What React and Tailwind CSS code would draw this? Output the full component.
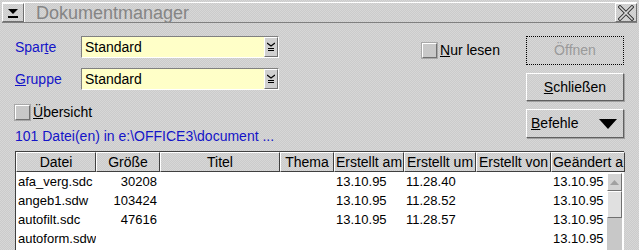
import React from "react";

const raised = "border border-t-white border-l-white border-b-[#707070] border-r-[#707070]";

function Combo({ value }) {
  return (
    <div className="flex h-[22px] w-[198px] border border-t-[#808080] border-l-[#808080] border-b-white border-r-white bg-[#ffffc8]">
      <div className="flex-1 pl-[3px] text-[14px] leading-[20px] text-black">{value}</div>
      <div className={"flex h-[20px] w-[14px] items-center justify-center bg-[#d0d0d0] " + raised}>
        <svg width="8" height="10" viewBox="0 0 8 10">
          <path d="M0 1 L4 4 L8 1" stroke="#000" strokeWidth="1.2" fill="none" />
          <rect x="1" y="6" width="6" height="1" fill="#000" />
          <rect x="1" y="8" width="6" height="1" fill="#000" />
        </svg>
      </div>
    </div>
  );
}

function Check({ children }) {
  return (
    <div className="flex items-center gap-[3px]">
      <div className="h-[15px] w-[15px] border border-t-white border-l-white border-b-[#707070] border-r-[#707070] bg-[#c8c8c8] shadow-[0_0_0_1px_#a8a8a8]" />
      <span className="text-[14px] leading-[16px] text-black">{children}</span>
    </div>
  );
}

const cols = [
  { name: "Datei", w: 80 },
  { name: "Größe", w: 64 },
  { name: "Titel", w: 120 },
  { name: "Thema", w: 54 },
  { name: "Erstellt am", w: 70 },
  { name: "Erstellt um", w: 72 },
  { name: "Erstellt von", w: 75 },
  { name: "Geändert a", w: 74 },
];

const rows = [
  ["afa_verg.sdc", "30208", "", "", "13.10.95", "11.28.40", "", "13.10.95"],
  ["angeb1.sdw", "103424", "", "", "13.10.95", "11.28.52", "", "13.10.95"],
  ["autofilt.sdc", "47616", "", "", "13.10.95", "11.28.57", "", "13.10.95"],
  ["autoform.sdw", "", "", "", "", "", "", "13.10.95"],
  ["", "", "", "", "", "", "", "13.10.95"],
];

export default function App() {
  return (
    <div className="h-[250px] w-[639px] overflow-hidden bg-[#d1d1d1] bg-[image:repeating-conic-gradient(#cbcbcb_0_25%,#d7d7d7_0_50%)] bg-[length:2px_2px] font-['Liberation_Sans',Arial,sans-serif] text-black">
      {/* Title bar */}
      <div className="px-[2px] pt-[2px]">
        <div className="flex h-[21px] items-stretch border-t border-t-white border-b border-b-[#808080]">
          <div className={"flex w-[22px] items-center justify-center " + raised}>
            <svg width="12" height="10" viewBox="0 0 12 10">
              <path d="M1 1 L11 1 L6 6 Z" fill="#000" />
              <rect x="1" y="8" width="10" height="2" fill="#000" />
            </svg>
          </div>
          <div className="flex flex-1 items-center border-l border-l-white pl-[11px] text-[18px] leading-[20px] text-[#858585]">
            Dokumentmanager
          </div>
          <div className={"flex w-[22px] items-center justify-center " + raised}>
            <svg width="16" height="16" viewBox="0 0 16 16">
              <path d="M2 2 L14 14 M14 2 L2 14" stroke="#303030" strokeWidth="3.4" strokeLinecap="square" />
              <path d="M2 2 L14 14 M14 2 L2 14" stroke="#d8d8d8" strokeWidth="1.6" strokeLinecap="square" />
            </svg>
          </div>
        </div>
      </div>

      {/* Upper form */}
      <div className="mt-[13px] flex pl-[15px] pr-[15px]">
        <div className="flex flex-1 flex-col">
          <div className="flex h-[22px] items-center">
            <span className="w-[66px] text-[14px] text-[#1414c8]">
              Spar<span className="underline">t</span>e
            </span>
            <Combo value="Standard" />
            <div className="ml-[143px] mt-[6px]">
              <Check>
                <span className="underline">N</span>ur lesen
              </Check>
            </div>
          </div>
          <div className="mt-[10px] flex h-[22px] items-center">
            <span className="w-[66px] text-[14px] text-[#1414c8]">
              <span className="underline">G</span>ruppe
            </span>
            <Combo value="Standard" />
          </div>
          <div className="mt-[14px]">
            <Check>
              <span className="underline">Ü</span>bersicht
            </Check>
          </div>
          <div className="mt-[8px] text-[14px] leading-[16px] text-[#1414c8]">
            101 Datei(en) in e:\OFFICE3\document ...
          </div>
        </div>
        <div className="flex w-[98px] flex-col gap-[8px]">
          <div className="flex h-[29px] items-center justify-center border border-dotted border-black text-[14px] text-[#9a9a9a]">
            Öffnen
          </div>
          <div className="flex h-[28px] items-center justify-center border border-t-white border-l-white border-b-[#606060] border-r-[#606060] text-[14px] shadow-[1px_1px_0_#a0a0a0]">
            <span>
              <span className="underline">S</span>chließen
            </span>
          </div>
          <div className="flex h-[29px] items-center justify-between border border-t-white border-l-white border-b-[#606060] border-r-[#606060] pl-[4px] pr-[6px] text-[14px] shadow-[1px_1px_0_#a0a0a0]">
            <span>
              <span className="underline">B</span>efehle
            </span>
            <svg width="18" height="10" viewBox="0 0 18 10">
              <path d="M0 0 L18 0 L9 10 Z" fill="#000" />
            </svg>
          </div>
        </div>
      </div>

      {/* Table */}
      <div className="ml-[15px] mt-[7px] w-[609px] border-l border-t border-[#404040]">
        <div className="flex h-[20px]">
          {cols.map((c) => (
            <div
              key={c.name}
              style={{ width: c.w }}
              className="flex shrink-0 items-center justify-center overflow-hidden whitespace-nowrap border border-t-white border-l-white border-b-[#404040] border-r-[#404040] text-[14px] leading-[18px]"
            >
              {c.name}
            </div>
          ))}
        </div>
        <div className="relative flex bg-white">
          <div className="flex-1">
            {rows.map((r, i) => (
              <div key={i} className="flex h-[19px] items-center">
                {r.map((v, j) => (
                  <div
                    key={j}
                    style={{ width: cols[j].w }}
                    className={
                      "shrink-0 overflow-hidden whitespace-nowrap text-[13px] leading-[17px] " +
                      (j === 1 ? "pr-[3px] text-right" : "pl-[2px]")
                    }
                  >
                    {v}
                  </div>
                ))}
              </div>
            ))}
          </div>
          <div className="absolute right-[2px] top-[1px] flex h-[120px] w-[15px] flex-col bg-[#c8c8c8]">
            <div className={"flex h-[18px] items-center justify-center bg-[#d2d2d2] " + raised}>
              <svg width="9" height="5" viewBox="0 0 9 5">
                <path d="M0 5 L4.5 0 L9 5 Z" fill="#a0a0a0" />
              </svg>
            </div>
            <div className={"h-[27px] bg-[#e0e0e0] " + raised} />
          </div>
        </div>
      </div>
    </div>
  );
}
